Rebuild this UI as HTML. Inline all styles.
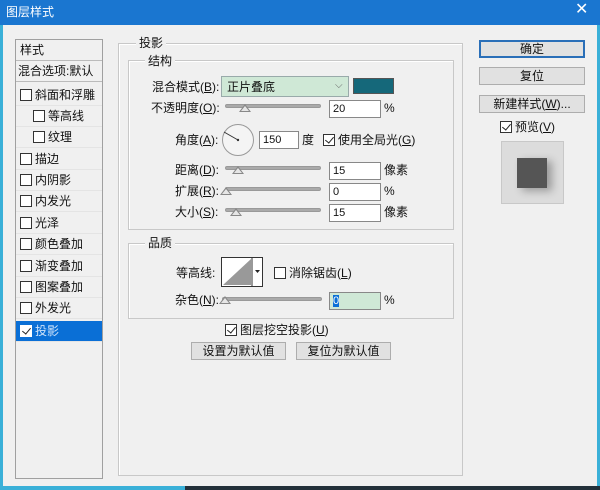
<!DOCTYPE html>
<html><head><meta charset="utf-8"><style>
*{margin:0;padding:0;box-sizing:border-box}
body{width:600px;height:490px;background:#f0f0f0;position:relative;overflow:hidden;font-family:"Liberation Sans","Noto Sans CJK SC",sans-serif;font-size:12px;color:#111}
.a{position:absolute}
.t{position:absolute;white-space:nowrap;line-height:14px}
.gb{position:absolute;border:1px solid #c8c8c8;box-shadow:inset 1px 1px 0 #fff}
.lg{position:absolute;background:#f0f0f0;padding:0 3px;line-height:14px}
.cb{display:inline-block;width:12px;height:12px;border:1px solid #333;background:#fff;vertical-align:-2px;margin-right:3px;position:relative}
.cb.on::after{content:"";position:absolute;left:3px;top:0;width:4px;height:7px;border:solid #222;border-width:0 1.5px 1.5px 0;transform:rotate(40deg)}
.in{position:absolute;background:#fff;border:1px solid #888;height:18px;font-size:11px;padding:2px 3px;line-height:13px}
.tr{position:absolute;height:4px;background:#aaa;border:1px solid #999;border-radius:2px;width:96px}
.th{position:absolute;width:0;height:0;border-left:6px solid transparent;border-right:6px solid transparent;border-bottom:8px solid #888}
.th::after{content:"";position:absolute;left:-4px;top:2px;border-left:4px solid transparent;border-right:4px solid transparent;border-bottom:5px solid #e6e6e6}
.btn{position:absolute;background:#e1e1e1;border:1px solid #adadad;text-align:center;line-height:16px}
.li{position:absolute;left:16px;width:86px;height:21px;padding-left:4px;line-height:21px;border-bottom:1px solid #e4e4e4}
</style></head><body>
<div class="a" style="left:0;top:0;width:600px;height:25px;background:#1a76d0"></div>
<div class="t" style="left:6px;top:5px;color:#fff;font-size:12px">图层样式</div>
<div class="t" style="left:575px;top:3px;color:#fff;font-size:16px">✕</div>
<div class="a" style="left:0;top:25px;width:3px;height:465px;background:#3ab0d8"></div>
<div class="a" style="left:597px;top:25px;width:3px;height:465px;background:#3ab0d8"></div>
<div class="a" style="left:0;top:486px;width:600px;height:4px;background:#3ab0d8"></div>
<div class="a" style="left:185px;top:486px;width:415px;height:4px;background:#23303a"></div>

<div class="a" style="left:15px;top:39px;width:88px;height:440px;border:1px solid #a0a0a0;background:#f0f0f0"></div>
<div class="li" style="top:40px;border-bottom:1px solid #bbb">样式</div>
<div class="li" style="top:61px;padding-left:2px;border-bottom:1px solid #bbb">混合选项:默认</div>
<div class="li" style="top:85px"><span class="cb"></span>斜面和浮雕</div>
<div class="li" style="top:106px;padding-left:17px"><span class="cb"></span>等高线</div>
<div class="li" style="top:127px;padding-left:17px"><span class="cb"></span>纹理</div>
<div class="li" style="top:149px"><span class="cb"></span>描边</div>
<div class="li" style="top:170px"><span class="cb"></span>内阴影</div>
<div class="li" style="top:191px"><span class="cb"></span>内发光</div>
<div class="li" style="top:213px"><span class="cb"></span>光泽</div>
<div class="li" style="top:234px"><span class="cb"></span>颜色叠加</div>
<div class="li" style="top:256px"><span class="cb"></span>渐变叠加</div>
<div class="li" style="top:277px"><span class="cb"></span>图案叠加</div>
<div class="li" style="top:298px"><span class="cb"></span>外发光</div>
<div class="li" style="top:321px;background:#0a6fd6;color:#cfe3fa"><span class="cb on" style="border-color:#fff"></span>投影</div>

<div class="gb" style="left:118px;top:43px;width:345px;height:433px"></div>
<div class="lg" style="left:136px;top:36px">投影</div>
<div class="gb" style="left:128px;top:60px;width:326px;height:170px"></div>
<div class="lg" style="left:145px;top:54px">结构</div>

<div class="t" style="left:152px;top:80px">混合模式(<u>B</u>):</div>
<div class="a" style="left:221px;top:76px;width:128px;height:21px;background:#cfe8d6;border:1px solid #9aa"></div>
<div class="t" style="left:227px;top:80px">正片叠底</div>
<div class="t" style="left:335px;top:79px;color:#666;font-size:10px">⌵</div>
<div class="a" style="left:353px;top:78px;width:41px;height:16px;background:#15687a;border:1px solid #555"></div>

<div class="t" style="left:151px;top:101px">不透明度(<u>O</u>):</div>
<div class="tr" style="left:225px;top:104px"></div><div class="th" style="left:239px;top:104px"></div>
<div class="in" style="left:329px;top:100px;width:52px">20</div><div class="t" style="left:384px;top:101px">%</div>

<div class="t" style="left:175px;top:133px">角度(<u>A</u>):</div>
<svg class="a" style="left:221px;top:123px" width="34" height="34"><circle cx="17" cy="17" r="15.5" fill="#f4f4f4" stroke="#999"/><line x1="17" y1="17" x2="3" y2="9" stroke="#333"/><circle cx="17" cy="17" r="1.2" fill="#333"/></svg>
<div class="in" style="left:259px;top:131px;width:40px">150</div>
<div class="t" style="left:302px;top:133px">度</div>
<div class="t" style="left:323px;top:133px"><span class="cb on"></span>使用全局光(<u>G</u>)</div>

<div class="t" style="left:175px;top:163px">距离(<u>D</u>):</div>
<div class="tr" style="left:225px;top:166px"></div><div class="th" style="left:232px;top:166px"></div>
<div class="in" style="left:329px;top:162px;width:52px">15</div><div class="t" style="left:384px;top:163px">像素</div>

<div class="t" style="left:175px;top:184px">扩展(<u>R</u>):</div>
<div class="tr" style="left:225px;top:187px"></div><div class="th" style="left:220px;top:187px"></div>
<div class="in" style="left:329px;top:183px;width:52px">0</div><div class="t" style="left:384px;top:184px">%</div>

<div class="t" style="left:175px;top:205px">大小(<u>S</u>):</div>
<div class="tr" style="left:225px;top:208px"></div><div class="th" style="left:230px;top:208px"></div>
<div class="in" style="left:329px;top:204px;width:52px">15</div><div class="t" style="left:384px;top:205px">像素</div>

<div class="gb" style="left:128px;top:243px;width:326px;height:76px"></div>
<div class="lg" style="left:145px;top:236px">品质</div>
<div class="t" style="left:176px;top:266px">等高线:</div>
<svg class="a" style="left:221px;top:257px" width="42" height="30"><rect x="0.5" y="0.5" width="41" height="29" fill="#fff" stroke="#333"/><polygon points="2,28 30,2 30,28" fill="#999"/><line x1="31" y1="1" x2="31" y2="29" stroke="#333"/><polygon points="34,13 39,13 36.5,16" fill="#222"/></svg>
<div class="t" style="left:274px;top:266px"><span class="cb"></span>消除锯齿(<u>L</u>)</div>
<div class="t" style="left:175px;top:293px">杂色(<u>N</u>):</div>
<div class="tr" style="left:222px;top:297px;width:100px"></div><div class="th" style="left:219px;top:296px"></div>
<div class="in" style="left:329px;top:292px;width:52px;background:#cfe8d6"><span style="background:#0a6fd6;color:#fff">0</span></div>
<div class="t" style="left:384px;top:293px">%</div>

<div class="t" style="left:225px;top:323px"><span class="cb on"></span>图层挖空投影(<u>U</u>)</div>
<div class="btn" style="left:191px;top:342px;width:95px;height:18px">设置为默认值</div>
<div class="btn" style="left:296px;top:342px;width:95px;height:18px">复位为默认值</div>

<div class="btn" style="left:479px;top:40px;width:106px;height:18px;border:2px solid #2a6fb8;line-height:14px">确定</div>
<div class="btn" style="left:479px;top:67px;width:106px;height:18px">复位</div>
<div class="btn" style="left:479px;top:95px;width:106px;height:18px">新建样式(<u>W</u>)...</div>
<div class="t" style="left:500px;top:120px"><span class="cb on"></span>预览(<u>V</u>)</div>
<div class="a" style="left:501px;top:141px;width:63px;height:63px;background:#dcdcdc;border:1px solid #c8c8c8"></div>
<div class="a" style="left:517px;top:158px;width:30px;height:30px;background:#555;box-shadow:5px 3px 8px rgba(0,0,0,.3)"></div>
</body></html>
